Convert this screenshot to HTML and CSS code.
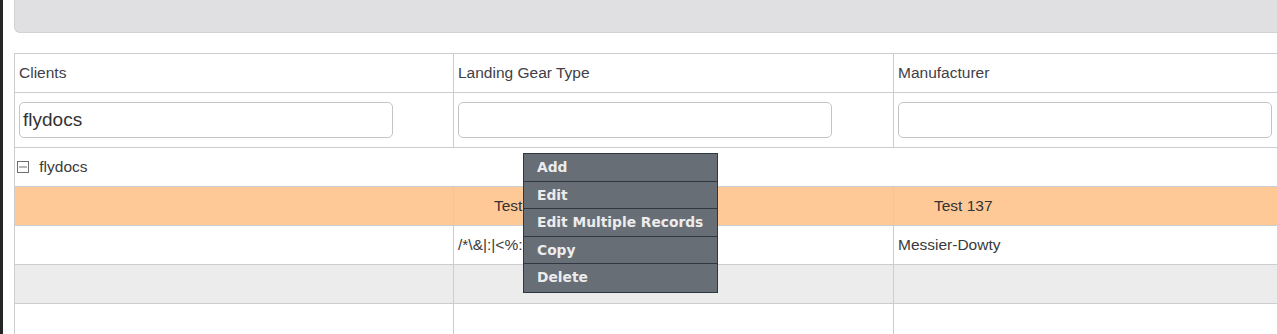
FILE: index.html
```html
<!DOCTYPE html>
<html lang="en">

<head>
  <meta charset="UTF-8">
  <meta name="viewport" content="width=device-width, initial-scale=1.0">
  <title>Landing Gear</title>
  <link rel="stylesheet" href="styles.css">
</head>

<body>
  <div class="screen">
    <div class="edge"></div>

    <div class="page">
      <div class="toolbar"></div>

      <table class="grid">
        <colgroup>
          <col class="col-first">
          <col class="col">
          <col class="col">
        </colgroup>
        <thead>
          <tr class="head-row">
            <th>Clients</th>
            <th>Landing Gear Type</th>
            <th>Manufacturer</th>
          </tr>
          <tr class="filter-row">
            <td><input type="text" class="filter" value="flydocs"></td>
            <td><input type="text" class="filter"></td>
            <td><input type="text" class="filter"></td>
          </tr>
        </thead>
        <tbody>
          <tr class="group-row">
            <td colspan="3">
              <svg class="toggle" width="12" height="12" viewBox="0 0 12 12">
                <rect x="0.5" y="0.5" width="11" height="11" fill="none" stroke="#6f6f6f" />
                <line x1="2" y1="6" x2="10" y2="6" stroke="#6f6f6f" />
              </svg>
              <span>flydocs</span>
            </td>
          </tr>
          <tr class="row selected">
            <td></td>
            <td>Test 137</td>
            <td>Test 137</td>
          </tr>
          <tr class="row">
            <td></td>
            <td class="plain">/*\&amp;|:|&lt;%:&gt;?</td>
            <td class="plain">Messier-Dowty</td>
          </tr>
          <tr class="row alt">
            <td></td>
            <td></td>
            <td></td>
          </tr>
          <tr class="row">
            <td></td>
            <td></td>
            <td></td>
          </tr>
        </tbody>
      </table>
    </div>

    <!-- right click menu -->
    <ul class="context-menu">
      <li>Add</li>
      <li>Edit</li>
      <li>Edit Multiple Records</li>
      <li>Copy</li>
      <li>Delete</li>
    </ul>
  </div>
</body>

</html>
```

FILE: styles.css
```css
* {
  margin: 0;
  padding: 0;
  box-sizing: border-box;
}

html,
body {
  overflow: hidden;
  background: white;
}

body {
  font-family: 'Liberation Sans', Arial, sans-serif;
  font-size: 15.5px;
  color: #3a3a3a;
}

.screen {
  position: relative;
  display: flex;
  min-height: 334px;
}

.edge {
  width: 3px;
  flex-shrink: 0;
  background: #262626;
}

.page {
  padding-left: 11px;
  width: 1400px;
  flex-shrink: 0;
}

.toolbar {
  height: 33px;
  background: #e0e0e2;
  border: 1px solid #d2d2d4;
  border-top: none;
  border-radius: 0 0 0 6px;
  margin-bottom: 20px;
}

.grid {
  border-collapse: collapse;
  table-layout: fixed;
  width: 1319px;
}

.col-first {
  width: 439px;
}

.col {
  width: 440px;
}

.grid th,
.grid td {
  border: 1px solid #cdcdd1;
  text-align: left;
  font-weight: normal;
  padding: 0 4px;
  height: 39px;
  white-space: nowrap;
  overflow: hidden;
}

.head-row th {
  color: #404048;
}

.filter-row td {
  height: 55px;
}

.filter {
  width: 374px;
  height: 36px;
  border: 1px solid #c4c4c8;
  border-radius: 5px;
  padding: 0 3px;
  font-family: 'Liberation Sans', Arial, sans-serif;
  font-size: 19px;
  color: #333;
  background: white;
}

.group-row td {
  padding-left: 2px;
}

.toggle {
  vertical-align: -1px;
  margin-right: 6px;
}

.row.selected td {
  background: #ffc997;
  padding-left: 40px;
  color: #333;
}

.row.selected td.plain,
.row td.plain {
  padding-left: 4px;
}

.row.alt td {
  background: #ececec;
}

.context-menu {
  position: absolute;
  left: 523px;
  top: 153px;
  width: 195px;
  list-style: none;
  background: #686e76;
  border: 1px solid #2f3743;
}

.context-menu li {
  height: 27.6px;
  line-height: 26.6px;
  padding-left: 13px;
  border-bottom: 1px solid #2f3743;
  font-family: 'DejaVu Sans', Verdana, sans-serif;
  font-weight: bold;
  font-size: 13.8px;
  color: #ececec;
}

.context-menu li:last-child {
  border-bottom: none;
}
```
